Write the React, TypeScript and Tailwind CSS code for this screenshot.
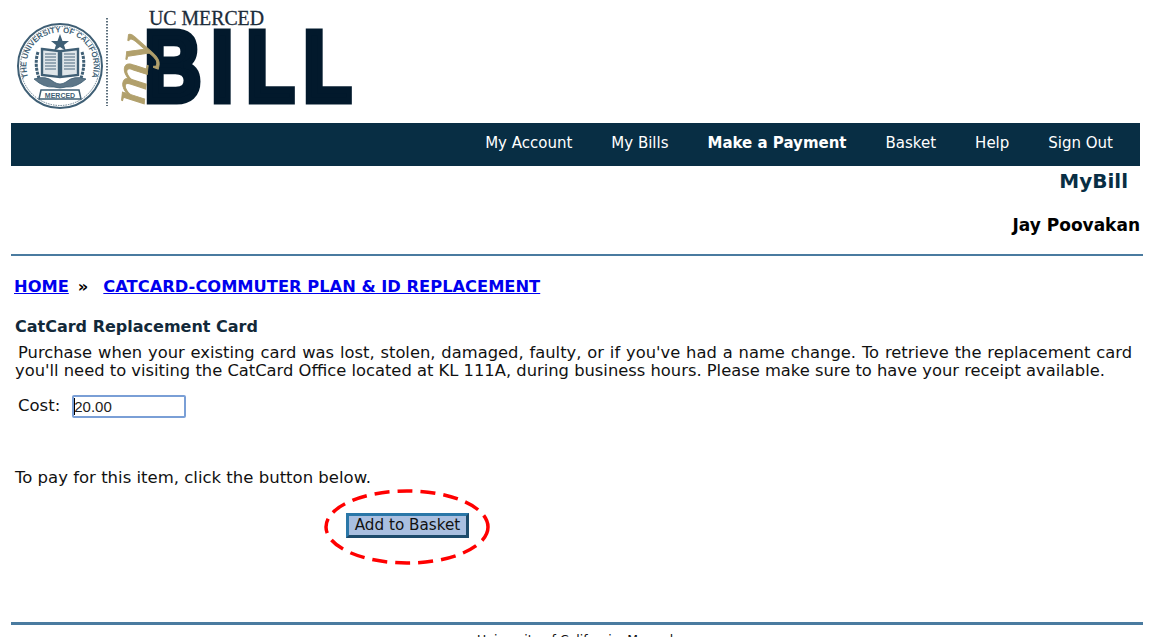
const navItems = [
  { label: "My Account", bold: false },
  { label: "My Bills", bold: false },
  { label: "Make a Payment", bold: true },
  { label: "Basket", bold: false },
  { label: "Help", bold: false },
  { label: "Sign Out", bold: false },
];

const Logo = () => (
  <svg width="360" height="112" viewBox="0 0 360 112" aria-label="UC Merced myBill">
    {/* seal */}
    <g transform="translate(53 63)" fill="none" stroke="#3f5f75">
      <circle r="42" strokeWidth="2" />
      <circle r="39.5" strokeWidth="0.8" strokeDasharray="1.5 1" />
      <path d="M-18 -17 L-1 -15 L-1 11 L-18 9 Z M18 -17 L1 -15 L1 11 L18 9 Z" fill="#dfe6ea" strokeWidth="2.4" />
      <path d="M-15 -12 H-4 M-15 -9 H-4 M-15 -6 H-4 M-15 -3 H-4 M-15 0 H-4 M-15 3 H-4 M4 -12 H15 M4 -9 H15 M4 -6 H15 M4 -3 H15 M4 0 H15 M4 3 H15" stroke="#7d93a2" strokeWidth="1.3" />
      <path d="M0 -32 L2.5 -25 L9 -25 L4 -21 L6 -15 L0 -19 L-6 -15 L-4 -21 L-9 -25 L-2.5 -25 Z" fill="#3f5f75" stroke="none" />
      <path d="M-22 -14 Q-26 -2 -21 12 M22 -14 Q26 -2 21 12" strokeWidth="3" strokeDasharray="3 1" />
      <path d="M-26 13 Q-14 9 -6 16 Q0 20 6 16 Q14 9 26 13 Q16 22 6 21 Q0 23 -6 21 Q-16 22 -26 13 Z" fill="#5d7688" strokeWidth="0.8" />
      <path d="M-19 24 H19 L21 33 H-21 Z" fill="#fff" strokeWidth="1.5" />
      <path id="sealTop" d="M-27 20 A33.6 33.6 0 1 1 27 20" stroke="none" />
      <text fontFamily="'Liberation Sans', sans-serif" fontSize="7.8" fontWeight="700" fill="#3f5f75" stroke="none">
        <textPath href="#sealTop" startOffset="50%" textAnchor="middle">THE UNIVERSITY OF CALIFORNIA</textPath>
      </text>
      <text y="31.5" textAnchor="middle" fontFamily="'Liberation Sans', sans-serif" fontSize="7" fontWeight="700" fill="#3f5f75" stroke="none">MERCED</text>
    </g>
    {/* dotted divider */}
    <line x1="100" y1="15" x2="100" y2="103" stroke="#5c6f7c" strokeWidth="2" strokeDasharray="1.5 1.5" />
    <text x="142" y="22" fontFamily="'Liberation Serif', serif" fontSize="20" fill="#1c2c3a" stroke="#1c2c3a" strokeWidth="0.3" textLength="115" lengthAdjust="spacingAndGlyphs">UC MERCED</text>
    <g transform="scale(0.79 1)">
      <text x="173.7 258.5 302.8 375" y="98.5" fontFamily="'Liberation Sans', sans-serif" fontSize="100" fontWeight="700" fill="#02192c" stroke="#02192c" strokeWidth="7">BILL</text>
    </g>
    <text transform="translate(137 103) rotate(-84)" fontFamily="'Liberation Serif', serif" fontSize="50" fontStyle="italic" fill="#b1a06c" stroke="#b1a06c" strokeWidth="0.8" textLength="70" lengthAdjust="spacingAndGlyphs">my</text>
  </svg>
);

export default function App() {
  return (
    <div className="h-[637px] w-[1174px] overflow-hidden bg-white font-['DejaVu_Sans',Verdana,sans-serif] text-[16px] text-[#111]">
      <div className="h-[123px] pl-[7px] pt-[3px]">
        <Logo />
      </div>

      <div className="mx-[11px] w-[1129px]">
        <nav className="flex h-[43px] items-center justify-end gap-[39px] bg-[#082e44] pb-[2px] pr-[27px] text-[15px] text-white">
          {navItems.map((item) => (
            <span key={item.label} className={item.bold ? "font-bold" : ""}>
              {item.label}
            </span>
          ))}
        </nav>
        <div className="pr-[12px] pt-[2px] text-right text-[20px] font-bold leading-[26px] text-[#082e44]">MyBill</div>
        <div className="pt-[19px] text-right text-[17px] font-bold leading-[24px] text-black">Jay Poovakan</div>
      </div>

      <div className="ml-[11px] mt-[17px] h-[2px] w-[1132px] bg-[#4a7ba0]" />

      <div className="ml-[14px] mt-[21px] flex items-center text-[16.3px] font-bold leading-[20px]">
        <a href="#home" className="text-[#0000ee] underline">HOME</a>
        <span className="ml-[9px] mr-[15px] text-black">»</span>
        <a href="#catcard" className="text-[#0000ee] underline">CATCARD-COMMUTER PLAN &amp; ID REPLACEMENT</a>
      </div>

      <div className="ml-[15px] w-[1125px]">
        <h2 className="mt-[20px] text-[16px] font-bold leading-[20px] text-[#12293a]">CatCard Replacement Card</h2>
        <p className="mt-[7px] w-[1117px] text-justify text-[16.33px] leading-[18px] [text-indent:3px]">
          Purchase when your existing card was lost, stolen, damaged, faulty, or if you've had a name change. To retrieve the replacement card you'll need to visiting the CatCard Office located at KL 111A, during business hours. Please make sure to have your receipt available.
        </p>
        <div className="mt-[14px] flex items-center pl-[3px] text-[16.5px]">
          <span>Cost:</span>
          <div className="relative ml-[12px]">
            <input
              readOnly
              value="20.00"
              className="block h-[23px] w-[114px] rounded-[2px] border-2 border-[#7a9fd6] pl-0 font-['Liberation_Sans',sans-serif] text-[15px] text-[#222] outline-none"
            />
            <span className="absolute left-[2px] top-[3px] h-[17px] w-px bg-black" />
          </div>
        </div>
        <p className="mt-[49px] text-[16.5px] leading-[20px]">To pay for this item, click the button below.</p>
      </div>

      <div className="relative ml-[346px] mt-[25px] w-fit">
        <button className="block h-[25px] w-[123px] border-[3px] border-b-[#1d4b6b] border-l-[#2a77a8] border-r-[#1d4b6b] border-t-[#2a77a8] bg-[#a9bfe0] text-center text-[15.2px] leading-[18px] text-[#111]">
          Add to Basket
        </button>
        <svg className="absolute -left-[23px] -top-[25px]" width="168" height="78" viewBox="0 0 168 78">
          <ellipse cx="84" cy="39" rx="81" ry="36" fill="none" stroke="#ff0000" strokeWidth="3.5" strokeDasharray="15 8" />
        </svg>
      </div>

      <div className="ml-[11px] mt-[84px] h-[3px] w-[1132px] bg-[#4a7ba0]" />
      <div className="mt-[7px] w-[1150px] text-center text-[12.5px] leading-[16px]">University of California, Merced</div>
    </div>
  );
}
